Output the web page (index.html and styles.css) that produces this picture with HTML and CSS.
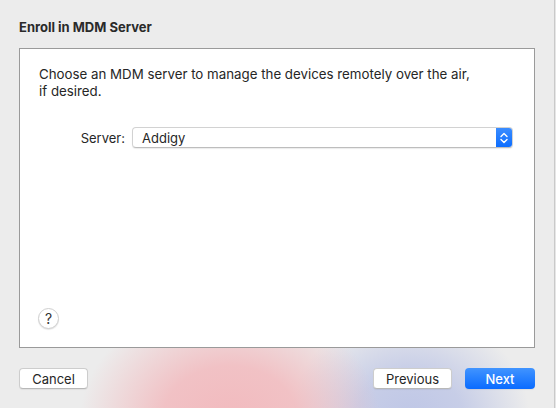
FILE: index.html
```html
<!doctype html>
<html lang="en">
  <head>
    <meta charset="UTF-8" />
    <meta name="viewport" content="width=device-width, initial-scale=1.0" />
    <title>Enroll in MDM Server</title>
    <link rel="stylesheet" href="styles.css">
  </head>

  <body>
    <div class="window">
      <h1 class="title">Enroll in MDM Server</h1>

      <div class="panel">
        <p class="intro">
          Choose an MDM server to manage the devices remotely over the air,<br />
          if desired.
        </p>

        <div class="row">
          <label for="server">Server:</label>
          <div class="popup" id="server">
            <span class="popup-value">Addigy</span>
            <span class="stepper">
              <svg width="8" height="12" viewBox="0 0 8 12">
                <path d="M1 4.5 L4 1.5 L7 4.5 M1 7.5 L4 10.5 L7 7.5" fill="none" stroke="#fff" stroke-width="1.4" stroke-linecap="round" stroke-linejoin="round" />
              </svg>
            </span>
          </div>
        </div>

        <button class="help" type="button">?</button>
      </div>

      <div class="footer">
        <button class="btn cancel" type="button">Cancel</button>
        <div class="right">
          <button class="btn previous" type="button">Previous</button>
          <button class="btn next" type="button">Next</button>
        </div>
      </div>
    </div>
  </body>
</html>
```

FILE: styles.css
```css
  body {
    margin: 0;
    font-family: Inter, "Liberation Sans", sans-serif;
    font-size: 13px;
    color: #262626;
    background-color: #e6e6e6;
  }

  .window {
    box-sizing: border-box;
    width: 555px;
    height: 408px;
    padding: 19px 0 0 19px;
    border-right: 1px solid #c9c9c9;
    background-color: #ececec;
    background-image:
      radial-gradient(ellipse 150px 120px at 230px 420px, rgba(242, 186, 190, 1) 0%, rgba(242, 186, 190, 0.85) 45%, rgba(242, 186, 190, 0) 100%),
      radial-gradient(ellipse 120px 110px at 410px 420px, rgba(190, 198, 230, 1) 0%, rgba(190, 198, 230, 0.8) 45%, rgba(190, 198, 230, 0) 100%);
  }

  .title {
    margin: 0;
    font-size: 13px;
    line-height: 16px;
    font-weight: 700;
    color: #2a2a2a;
  }

  .panel {
    box-sizing: border-box;
    width: 516px;
    height: 300px;
    margin-top: 13px;
    padding: 17px 19px 18px 18px;
    background: #fff;
    border: 1px solid #9a9a9a;
    display: flex;
    flex-direction: column;
  }

  .intro {
    margin: 0 0 0 1px;
    font-size: 13.3px;
    line-height: 17px;
    color: #262626;
  }

  .row {
    display: flex;
    align-items: center;
    gap: 7px;
    margin-top: 27px;
  }

  .row label {
    width: 87px;
    text-align: right;
  }

  .popup {
    box-sizing: border-box;
    width: 381px;
    height: 21px;
    display: flex;
    align-items: center;
    justify-content: space-between;
    border: 1px solid #d2d2d2;
    border-bottom-color: #bdbdbd;
    border-radius: 4px;
    box-shadow: 0 1px 1px rgba(0, 0, 0, 0.08);
    overflow: hidden;
  }

  .popup-value {
    padding-left: 9px;
  }

  .stepper {
    width: 16px;
    height: 21px;
    display: flex;
    align-items: center;
    justify-content: center;
    background: linear-gradient(#3d8eff, #0a6cff);
  }

  .help {
    margin-top: auto;
    width: 21px;
    height: 21px;
    padding: 0;
    border-radius: 50%;
    border: 1px solid #cfcfcf;
    background: #fff;
    box-shadow: 0 1px 1px rgba(0, 0, 0, 0.1);
    font-family: inherit;
    font-size: 14px;
    color: #333;
  }

  .footer {
    display: flex;
    justify-content: space-between;
    width: 516px;
    margin-top: 20px;
  }

  .right {
    display: flex;
    gap: 13px;
  }

  .btn {
    box-sizing: border-box;
    height: 21px;
    padding: 0;
    border: 1px solid #cdcdcd;
    border-bottom-color: #b8b8b8;
    border-radius: 4px;
    background: #fff;
    font-family: inherit;
    font-size: 13px;
    color: #262626;
    box-shadow: 0 1px 1px rgba(0, 0, 0, 0.06);
  }

  .cancel {
    width: 69px;
  }

  .previous {
    width: 79px;
  }

  .next {
    width: 70px;
    border: none;
    color: #fff;
    font-weight: 500;
    background: linear-gradient(#4194ff, #0a6bff);
  }
```
